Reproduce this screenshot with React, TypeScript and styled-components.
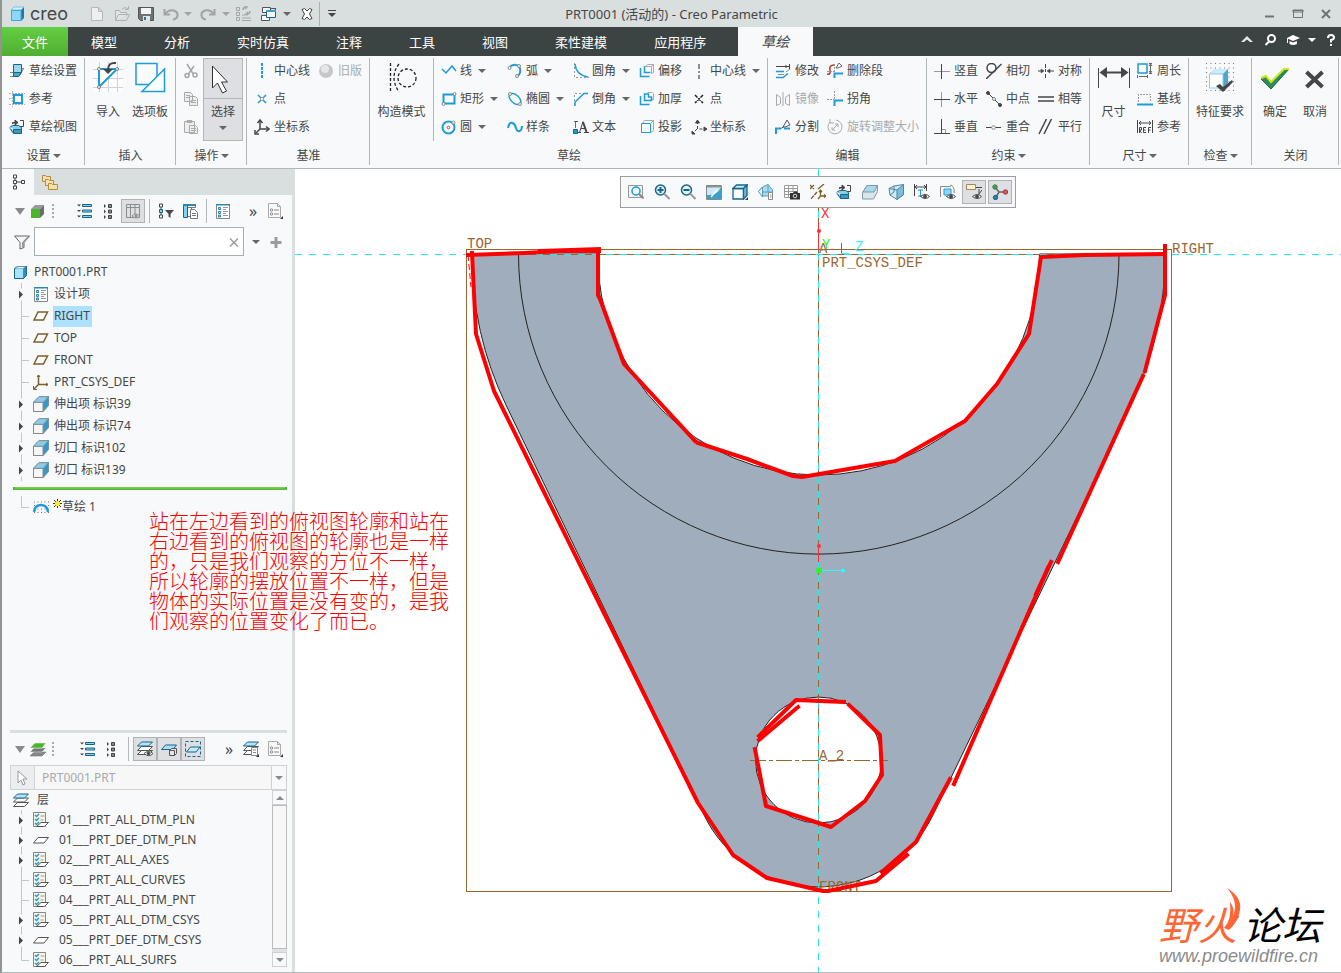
import React from "react";
import styled, { createGlobalStyle, css } from "styled-components";

const c = {
  panel: "#f7f9fb",
  bar: "#d9dfde",
  dark: "#3b4343",
  text: "#444746",
  muted: "#a9abab",
  line: "#b0b9b9",
  blue: "#1f9bd7",
  deep: "#17648a",
  ink: "#464646",
  gray: "#a6a6a6",
  brown: "#996633",
  cyan: "#2ee6e6",
  red: "#ff0000",
  pressed: "#dddfe2",
};

const sans = `"Noto Sans", "Noto Sans CJK SC", sans-serif`;
const mono = `"Liberation Mono", monospace`;

const GlobalStyle = createGlobalStyle`
  * { box-sizing: border-box; }
  body {
    margin: 0;
    font: 12px/16px ${sans};
    color: ${c.text};
    background: #fff;
  }
  button, input, select {
    font: inherit;
    color: inherit;
    margin: 0;
    padding: 0;
    border: 0;
    border-radius: 0;
    background: none;
  }
  ul { list-style: none; margin: 0; padding: 0; }
  svg { display: block; flex: none; }
`;

/* ---------- icons ---------- */

const glyphs: Record<string, React.ReactNode> = {
  logo: (
    <>
      <path d="M11 4l3-3v11l-3 3z" fill="#1b7bac" />
      <path d="M1 4l3-3h10l-3 3z" fill="#d5f1fd" stroke="#3ba9dc" strokeWidth=".6" />
      <path d="M1.500 4.500h9.500v10H1.500z" fill="#8fd6f7" stroke="#3ba9dc" strokeWidth="1" />
    </>
  ),
  newFile: <path d="M2.500 1.500h7l4 4v9h-11zM9.500 1.500v4h4" fill="#eef0f0" stroke="#b4b8b8" />,
  openFile: (
    <g fill="#e3e5e5" stroke="#aeb2b2">
      <path d="M1.500 14.500v-10h4l1 2h6v3" />
      <path d="M1.500 14.500l3-6h11l-3 6zM8 3q3-3 6 0M14.500 0v3.500H11" fill="none" />
    </g>
  ),
  save: (
    <>
      <path d="M.5 1.500h15v13H2.500l-2-2z" fill="#6f7272" stroke="#555" />
      <path d="M3 2h10v6H3z" fill="#f3f5f5" />
      <path d="M5 10h7v5H5z" fill="#dfe4e6" />
      <path d="M6 11h2v3H6z" fill="#2a7196" />
    </>
  ),
  undo: <path d="M1.500 3v5.500H7M2 8q4-5 9-3.500Q15 6 14.500 9.500T10 13.500" fill="none" stroke="#a0a4a4" strokeWidth="2" />,
  redo: <path d="M14.500 3v5.500H9M14 8q-4-5-9-3.500Q1 6 1.500 9.500T6 13.500" fill="none" stroke="#a0a4a4" strokeWidth="2" />,
  regen: (
    <g fill="none" stroke="#a3a7a7">
      <path d="M.5 1.500h3v3h-3zM.5 6.500h3v3h-3zM.5 11.500h3v3h-3zM6 12h9M6 14.500h9M6 9h4" />
      <path d="M7 4q0-3 3-3M14 5q0 3-3 3M9 0l2 1-2 2M12 6l-2 2 2 1" strokeWidth="1.500" />
    </g>
  ),
  windows: (
    <g fill="#f7f9fb" stroke="#555">
      <path d="M1.500 1.500h8v5h-8zM.5 9.500h8v5h-8z" />
      <path d="M5.500 4.500h9v7h-9z" stroke={c.deep} />
      <path d="M5 4h10v2H5z" fill="#3ba0cc" stroke="none" />
      <path d="M10 2.500h5M14.500 2v2" fill="none" />
    </g>
  ),
  closeWin: <path d="M3 3.500l2.500-1L8 5l2.500-2.500L13 3.500 10.500 8l2.500 4.500-2.500 1L8 11l-2.500 2.500L3 12.500 5.500 8z" fill="#fff" stroke="#444" />,
  min: <path d="M3 10.500h9" stroke="#6d7474" strokeWidth="2" />,
  max: <path d="M3.500 4.500h9v7h-9zM3 4h10v2H3z" fill="none" stroke="#6d7474" />,
  x: <path d="M4 4l8 8M12 4l-8 8" stroke="#6d7474" strokeWidth="2" />,
  up: <path d="M2 10l6-6 6 6H11L8 7.500 5 10z" fill="#e4e8e8" />,
  find: (
    <g fill="none" stroke="#fff" strokeWidth="2">
      <circle cx="9.500" cy="6.500" r="3.500" />
      <path d="M7 9.500L3.500 13" />
    </g>
  ),
  learn: <path d="M8 3l7 3-7 3-5-2.200V11H2V6zM4.500 9L8 10.500 12 9v3q-4 2-7.500 0z" fill="#fff" />,
  help: (
    <g fill="none" stroke="#fff" strokeWidth="2">
      <path d="M5 6q0-3 3-3t3 2.500Q11 7.500 8 8v2.500M8 12v2" />
    </g>
  ),
  sketchSetup: (
    <g fill="none" stroke={c.ink}>
      <path d="M1 13.500h9l5-8.500" stroke="#888" />
      <path d="M1 9.500h3M12 5.500h3" stroke="#888" />
      <path d="M4.500 1.500h8v8h-8z" fill="#9bd8ec" stroke={c.deep} />
      <path d="M4.500 9.500h8l-3 4h-5z" fill="#4ba8cf" stroke={c.deep} />
    </g>
  ),
  reference: (
    <g fill="none">
      <path d="M0 7.500h5M3.500 0v16M0 13.500h16M0 2.500h16" stroke="#b0b0b0" strokeDasharray="2 1" />
      <path d="M5 4h8v8H5z" stroke={c.blue} strokeWidth="2" />
    </g>
  ),
  viewFlip: (
    <g fill="none" stroke={c.ink}>
      <path d="M3.500 5V3.500H7M6 1l3 2.500L6 6z" fill={c.ink} />
      <path d="M11 1.500h3.500v6H11" />
      <path d="M.5 8.500l3-2h6l3 2v6h-8z" fill="#8ccdea" stroke={c.deep} />
      <path d="M4.500 14.500v-4h8M.5 8.500l4 2" stroke="#fff" />
      <path d="M4.500 10.500h8v4h-8z" fill="#3f97c0" stroke={c.deep} />
    </g>
  ),
  cut: (
    <g fill="none" stroke="#a5a5a5" strokeWidth="1.500">
      <circle cx="4" cy="12.500" r="2" />
      <circle cx="12" cy="12" r="2" />
      <path d="M4 1l6 9.500M11 3L5.500 11" />
    </g>
  ),
  copy: <path d="M1.500 1.500h6l2 2v7h-8zM6.500 5.500h6l2 2v7h-8zM3 4.500h4M3 6.500h3M8 9.500h5M8 11.500h5" fill="#eeeeee" stroke="#aaa" />,
  paste: <path d="M1.500 2.500h10v11h-10zM4 1.500h5v2H4zM6.500 6.500h6l2 2v6h-8zM8 9.500h5M8 11.500h5" fill="#eeeeee" stroke="#aaa" />,
  axis: <path d="M8 0v16" stroke={c.blue} strokeWidth="2" strokeDasharray="3 1" />,
  ball: (
    <>
      <circle cx="8" cy="8" r="7" fill="#c6c7c8" />
      <circle cx="7" cy="6" r="4" fill="#e6e6e6" />
    </>
  ),
  point: (
    <>
      <path d="M4 4l8 8M12 4l-8 8" stroke={c.blue} strokeWidth="1.500" />
      <path d="M6.500 6.500h3v3h-3z" fill="#f7f9fb" stroke="#777" strokeWidth=".6" />
    </>
  ),
  csys: (
    <g fill="none" stroke={c.ink} strokeWidth="1.500">
      <path d="M6 2v8h8M6 10l-4 4" />
      <path d="M3.500 4L6 1l2.500 3M12 7.500L15 10l-3 2.500M1 11v4h4" />
    </g>
  ),
  polyline: <path d="M1 6l4 4 6-7 4 5" fill="none" stroke={c.blue} strokeWidth="1.500" />,
  rectangle: (
    <g fill="#f7f9fb">
      <path d="M2.500 3.500h11v9h-11z" stroke={c.blue} strokeWidth="2" />
      <circle cx="13.500" cy="3" r="1.500" stroke="#888" />
      <circle cx="2.500" cy="13" r="1.500" stroke="#888" />
    </g>
  ),
  circle: (
    <g fill="none">
      <circle cx="7.500" cy="8.500" r="6" stroke={c.blue} strokeWidth="2" />
      <circle cx="7.500" cy="8.500" r="1.300" stroke="#666" />
      <circle cx="12.500" cy="3.500" r="1.500" stroke="#888" fill="#f7f9fb" />
    </g>
  ),
  arc: (
    <g fill="none">
      <path d="M3 3.500q6-4 9.500 1 2 4-1 8" stroke={c.blue} strokeWidth="2" />
      <g fill="#f7f9fb" stroke="#888">
        <circle cx="2.500" cy="5" r="1.500" />
        <circle cx="12" cy="3" r="1.500" />
        <circle cx="10" cy="13" r="1.500" />
      </g>
    </g>
  ),
  ellipse: (
    <g fill="none">
      <ellipse cx="8" cy="8" rx="7" ry="4" transform="rotate(42 8 8)" stroke={c.blue} strokeWidth="1.500" />
      <g fill="#f7f9fb" stroke="#888">
        <circle cx="3" cy="3" r="1.500" />
        <circle cx="13" cy="13" r="1.500" />
      </g>
    </g>
  ),
  spline: <path d="M1 9q1-6 4.500-5 2.500 1 3.500 5t3.500 3Q15 11 15 7" fill="none" stroke={c.blue} strokeWidth="2" />,
  fillet: (
    <g fill="none">
      <path d="M1.500 0v14.500H16" stroke="#999" strokeDasharray="2 2" />
      <path d="M2 1q1 11 13 13" stroke={c.blue} strokeWidth="1.500" />
    </g>
  ),
  chamfer: (
    <g fill="none">
      <path d="M1.500 14V2.500H15" stroke="#999" strokeDasharray="2 2" />
      <path d="M2 15V11l9-8.500h4" stroke={c.blue} strokeWidth="1.500" />
    </g>
  ),
  textTool: (
    <g fill="none" stroke={c.ink}>
      <path d="M2.500 9V2.500H5M1 2.500h3" strokeWidth=".8" />
      <path d="M.5 10.500h4v4h-4z" fill={c.blue} stroke={c.deep} />
      <path d="M5 13.500h3M11 13.500h5M6.500 13.500L10 2.500M8 9.500h5" />
      <path d="M10 3l3.500 10" strokeWidth="2" />
    </g>
  ),
  offset: (
    <g fill="none">
      <path d="M6.500 3.500l2-2h6v8l-2 1M6.500 3.500h6v7M12.500 3.500l2-2" stroke="#aaa" />
      <path d="M1.500 5v8.500h9M5.500 3v6.500h6" stroke={c.blue} strokeWidth="1.500" />
    </g>
  ),
  thicken: (
    <g fill="none">
      <path d="M8.500 1.500h5l1 1v6h-3" stroke="#aaa" />
      <path d="M1.500 5v8.500h9M5.500 3v6.500h7V6h-3V3z" stroke={c.blue} strokeWidth="1.500" />
    </g>
  ),
  project: (
    <g fill="none">
      <path d="M3.500 4.500l2-3h9v10l-3 2M12 4l2.500-2.500" stroke="#aaa" />
      <path d="M2.500 4.500h9v9h-9z" stroke={c.blue} />
    </g>
  ),
  centerDash: <path d="M8 1v15" stroke="#222" strokeDasharray="5 2 2 2" />,
  pointDash: <path d="M4 4l8 8M12 4l-8 8" stroke="#222" strokeWidth="1.500" strokeDasharray="3.500 1" />,
  csysDash: (
    <g fill="none" stroke={c.ink}>
      <path d="M6.500 2v8H14M6 10l-5 5" strokeDasharray="3 2" />
      <path d="M4.500 4l2-3 2 3zM13 8l3 2-3 2zM1 12v3h3z" fill={c.ink} />
    </g>
  ),
  modify: (
    <g fill="none">
      <path d="M1 3.500h14M14.500 1v5M11 2v3" stroke={c.ink} />
      <path d="M1 8.500h8M1 14.500h7l5-4" stroke={c.blue} strokeWidth="1.500" />
      <path d="M3 11.500h6M11 9l4-3" stroke="#888" />
    </g>
  ),
  mirror: <path d="M8 1v14M1.500 3.500l4 3v6l-4 2zM14.500 3.500l-4 3v6l4 2z" fill="none" stroke="#aaa" />,
  divide: (
    <g fill="none">
      <path d="M1 15V9.500h5M9 9.500h6" stroke={c.blue} strokeWidth="2" />
      <path d="M8 8l4-7 3 5-5 2z" fill="#f7f9fb" stroke="#555" />
      <path d="M6 9.500l3-2" stroke="#555" />
    </g>
  ),
  trim: (
    <g fill="none">
      <path d="M0 11q4 1 3-4t4-5" stroke="#b5352a" strokeWidth="1.500" />
      <path d="M7.500 15v-4.500H16" stroke={c.blue} strokeWidth="2" />
      <path d="M9 5l3-5 3 3-4 2z" fill="#f7f9fb" stroke="#666" />
      <path d="M0 8.500h7M7.500 1v8" stroke="#999" strokeDasharray="2 1" />
    </g>
  ),
  corner: (
    <g fill="none">
      <path d="M7.500 0v9M0 8.500h7" stroke="#999" strokeDasharray="2 1" />
      <path d="M7.500 15V9.500H16" stroke={c.blue} strokeWidth="2" />
    </g>
  ),
  rotate: (
    <g fill="none" stroke="#aaa">
      <path d="M3 3A7 7 0 1 0 9 1M3 0v4h4" />
      <path d="M5 11l6-6M5 8v3h3M8 5h3v3" />
    </g>
  ),
  cVert: (
    <g fill="none">
      <path d="M0 8.500h16" stroke="#999" />
      <path d="M7.500 1v15" stroke={c.ink} />
    </g>
  ),
  cHoriz: (
    <g fill="none">
      <path d="M7.500 1v15" stroke="#999" />
      <path d="M0 8.500h16" stroke={c.ink} />
    </g>
  ),
  cPerp: (
    <g fill="none" stroke={c.ink}>
      <path d="M0 14.500h16M7.500 0v14" />
      <path d="M8 10.500h3.500V14" stroke="#999" />
    </g>
  ),
  cTangent: (
    <g fill="none" stroke={c.ink}>
      <circle cx="5.500" cy="5" r="4.500" strokeWidth="1.500" />
      <path d="M0 16L15.500 1" strokeWidth="1.500" />
    </g>
  ),
  cMid: (
    <g fill={c.ink} stroke={c.ink}>
      <path d="M2 2l12 12" />
      <circle cx="2" cy="2" r="1.500" />
      <circle cx="14" cy="14" r="1.500" />
      <circle cx="8" cy="8" r="1.500" fill="#fff" stroke="#888" />
    </g>
  ),
  cCoin: (
    <g fill="#fff" stroke={c.ink}>
      <path d="M0 8.500h15" />
      <circle cx="7.500" cy="8.500" r="1.800" stroke="#888" />
    </g>
  ),
  cSym: (
    <g fill={c.ink} stroke={c.ink}>
      <path d="M7.500 1v4M7.500 6v3M7.500 11v4M0 8h4M11 8h5" />
      <path d="M3 6l3 2-3 2zM12 6L9 8l3 2z" strokeWidth=".5" />
    </g>
  ),
  cEqual: <path d="M0 6h16M0 10h16" stroke={c.ink} strokeWidth="1.500" />,
  cParallel: <path d="M1 15L8.500 0M6 15L13.500 0" stroke={c.ink} strokeWidth="1.500" />,
  perimeter: (
    <g fill="none">
      <path d="M1 1h9v9H1z" stroke={c.blue} strokeWidth="1.500" />
      <path d="M13.500 1v9M12 .5h3M12 10.500h3M2 13.500h8M.5 12v3M10.500 12v3" stroke="#666" />
      <path d="M12 3l1.500-2L15 3M12 8l1.500 2L15 8" stroke="#666" />
    </g>
  ),
  baseline: (
    <g fill="none">
      <path d="M1.500 11V3.500h12V11" stroke="#999" strokeDasharray="2 1" />
      <path d="M0 13.500h16" stroke={c.blue} strokeWidth="2" />
    </g>
  ),
  refDim: (
    <g fill="none" stroke={c.ink}>
      <path d="M.5 1v13M15.500 1v13M2 4h12M4 2L2 4l2 2M12 2l2 2-2 2" />
      <path d="M2.500 14V8.500h2v2.500h-2l2 3M9 8.500H6.500v5H9M6.500 11H8.500M11.500 14V8.500H14M11.500 11h2" strokeWidth="1" />
    </g>
  ),
  treeTab: (
    <g fill="none" stroke={c.ink}>
      <path d="M3.500 1h3v3h-3zM3.500 6.500h3v3h-3zM3.500 12h3v3h-3zM11.500 6.500h3v3h-3zM5 4v2.500M5 9.500V12M6.500 8h5" />
    </g>
  ),
  folders: (
    <g fill="#f6e0ae" stroke="#b98b3c">
      <path d="M.5 1.500h3l1 1h4v5h-8z" />
      <path d="M3.500 5.500h3l1 1h4v5h-8z" />
      <path d="M6.500 9.500h3l1 1h5v5h-9z" />
    </g>
  ),
  greenCube: (
    <>
      <path d="M1 6h9v9H1z" fill="#4bb52c" />
      <path d="M1 6l4-4h9l-4 4z" fill="#9b9b9b" />
      <path d="M10 6l4-4v9l-4 4z" fill="#6c6c6c" />
    </>
  ),
  dots: <path d="M7 1v15" stroke="#a9abab" strokeWidth="2" strokeDasharray="2 2" />,
  expand: (
    <g>
      <path d="M5.500 1.500h9v2h-9zM5.500 7h9v2h-9zM5.500 12.500h9v2h-9z" fill="#7fd3f5" stroke={c.deep} />
      <path d="M0 1.500h4l-2 2zM0 7h4l-2 2zM0 12.500h4l-2 2z" fill="#444" />
    </g>
  ),
  collapse: (
    <g>
      <path d="M7.500 1.500h3v3h-3zM7.500 7h3v3h-3zM7.500 12.500h3v3h-3z" fill="#888" stroke="#444" />
      <path d="M3 1l2 2-2 2zM3 6.500l2 2-2 2zM3 12l2 2-2 2z" fill="#444" />
    </g>
  ),
  columns: (
    <g fill="none" stroke="#8b8d8f">
      <path d="M1.500 1.500h13v13h-13zM1.500 4.500h13M5.500 2v12M10 2v12" />
      <path d="M7 13q3-4 8 0-4 4-8 0z" fill="#ddd" />
      <circle cx="11" cy="13" r="1" fill="#777" />
    </g>
  ),
  treeFilter: (
    <g fill="none" stroke={c.ink}>
      <path d="M1.500 1h3v3h-3zM1.500 12h3v3h-3zM3 4v8" />
      <path d="M1.500 6.500h3v3h-3z" fill="#7fd3f5" stroke={c.deep} />
      <path d="M7 7h9l-3.500 4v4l-2-1.500V11z" fill={c.ink} stroke="none" />
    </g>
  ),
  treeColumns: (
    <g fill="#fff" stroke="#777">
      <path d="M1.500 1.500h12v3h-12zM5.500 4.500h4v9h-4z" />
      <path d="M1.500 2.500h4v12h-4z" fill="#7fd3f5" stroke={c.deep} />
      <path d="M1 1h13v2H1z" fill="#2b87b3" stroke="none" />
      <path d="M8.500 6.500h4l3 3v6h-7zM10 10.500h4M10 12.500h4" />
    </g>
  ),
  design: (
    <g>
      <path d="M1.500 1.500h13v14h-13z" fill="#fff" stroke="#888" />
      <path d="M1 1h14v1.500H1z" fill="#2b87b3" />
      <path d="M3.500 4.500h2v2h-2zM3.500 8.500h2v2h-2zM3.500 12h2v2h-2z" fill="#9fdcf8" stroke="#2b87b3" />
      <path d="M8 4.500h5M8 6.500h3M8 8.500h5M8 10.500h3M8 12.500h5" stroke="#999" />
    </g>
  ),
  settingsDoc: (
    <g>
      <path d="M1.500.5h9l3 3v11h-12z" fill="#fafafa" stroke="#aaa" />
      <path d="M10.500.5v3h3" fill="none" stroke="#aaa" />
      <circle cx="4.500" cy="7" r="1.200" fill="none" stroke="#888" />
      <circle cx="4.500" cy="11" r="1.200" fill="none" stroke="#888" />
      <path d="M7 7h5M7 11h5" stroke="#888" />
      <path d="M16 13v3h-3z" fill="#333" />
    </g>
  ),
  funnel: (
    <g>
      <path d="M.5 2h15L10 8.500v5L6 15V8.500z" fill="#f5f5f5" stroke="#666" />
      <path d="M10 8.500v4.500l-2 1V8.500L13 3h2.500z" fill="#999" />
    </g>
  ),
  plus: <path d="M8 3v11M2.500 8.500h11" stroke="#9b9d9d" strokeWidth="3" />,
  part: (
    <g stroke={c.deep}>
      <path d="M1.500 4.500l3-2h9v9l-3 3h-9z" fill="#a5e3fb" />
      <path d="M10.500 4.500l3-2v9l-3 3z" fill="#2f8dbb" strokeWidth=".5" />
      <path d="M2 4.500l3-2h8l-3 2z" fill="#d8f4fe" strokeWidth=".3" />
    </g>
  ),
  plane: <path d="M1 12L5 4h9.500l-4 8z" fill="none" stroke="#7d5f2a" strokeWidth="1.500" />,
  csysBrown: (
    <g fill="none" stroke="#7d5f2a" strokeWidth="1.500">
      <path d="M5.500 1v9.500H15M5.500 10.500L1 15" />
      <path d="M4 3l1.500-2L7 3M13 9l2 1.500L13 12M.5 12v3.500H4" strokeWidth="1" />
    </g>
  ),
  solid: (
    <g stroke="#888">
      <path d="M.5 6L6 .5h9.500v9L10 15.500H.5z" fill="#d5ecf6" />
      <path d="M10 6.500l5.500-6v9l-5.500 6z" fill="#3a97c4" stroke="#6b98ab" />
      <path d="M.5 6.500H10v9H.5z" fill="#f7f7f7" />
      <path d="M6 .8h9L10 6.200H1z" fill="#8fcbe5" stroke="#6b98ab" strokeWidth=".6" />
    </g>
  ),
  sketch: (
    <g fill="none">
      <path d="M1 3h15M1 6.500h15M1 10h15M1 13.500h15" stroke="#777" strokeDasharray="1 2.500" />
      <path d="M1 13q1-7 7-7t7 7" stroke={c.blue} strokeWidth="2.500" />
    </g>
  ),
  layersGreen: (
    <g strokeWidth=".5">
      <path d="M0 15l4-4h12l-4 4z" fill="#888" stroke="#666" />
      <path d="M0 11l4-4h12l-4 4z" fill="#777" stroke="#f7f9fb" />
      <path d="M0 7l5-5h11l-4 5z" fill="#4bb52c" stroke="#f7f9fb" />
    </g>
  ),
  layers: (
    <g fill="#fff" stroke="#555">
      <path d="M.5 14.500l4-4h11l-4 4z" />
      <path d="M.5 10l4-4h11l-4 4z" />
      <path d="M.5 6l4-4h11l-4 4z" fill="#b7e6fa" stroke={c.deep} />
    </g>
  ),
  layersEye: (
    <g fill="#fff" stroke="#555">
      <path d="M.5 13.500l4-4h11l-4 4z" />
      <path d="M.5 9.500l4-4h11l-4 4z" />
      <path d="M.5 5l4-4h11l-4 4z" fill="#b7e6fa" stroke={c.deep} />
      <path d="M7 12.500q4-4 9 0-4 4.500-9 0z" />
      <circle cx="11.500" cy="12.500" r="1.500" fill="#444" />
    </g>
  ),
  layerCube: (
    <g fill="none" stroke="#555">
      <path d="M.5 8.500l4-4.500h11L12 8.500z" fill="#a9e0f8" stroke={c.deep} />
      <path d="M8.500 9.500h5v5h-5zM8.500 9.500l2-2h5v5l-2 2" fill="#e6e6e6" />
    </g>
  ),
  layerDash: (
    <g fill="none">
      <path d="M.5.5h15v15H.5z" stroke={c.deep} strokeDasharray="3 2" />
      <path d="M1.500 11l4-5h9.500l-4 5z" fill="#c5ecfb" stroke={c.deep} />
    </g>
  ),
  layersList: (
    <g fill="#fff" stroke="#555">
      <path d="M.5 13.500l4-4h7v4z" />
      <path d="M.5 9.500l4-4h11l-4 4z" />
      <path d="M.5 5l4-4h11l-4 4z" fill="#b7e6fa" stroke={c.deep} />
      <path d="M8.500 6.500h6v8h-6zM10 9h3M10 11.500h3" stroke="#888" />
      <path d="M16 13v3h-3z" fill="#333" stroke="none" />
    </g>
  ),
  cursorSmall: <path d="M3 1v12l3-3 2 5 2-1-2-5h4z" fill="#fff" stroke="#999" />,
  layerRule: (
    <g>
      <path d="M.5.5h12v14H.5z" fill="#fdf6e4" stroke="#888" />
      <path d="M2 3l1.500 1.500L6 2M2 7l1.500 1.500L6 6M2 11l1.500 1.500L6 10" fill="none" stroke={c.blue} strokeWidth="1.500" />
      <path d="M7.500 4h4M7.500 8h3" stroke="#999" />
      <path d="M3.500 14.500L8 10.500h7.500l-4 4z" fill="#fff" stroke="#555" />
    </g>
  ),
  layerItem: <path d="M.5 11L5 5.500h10.500L11 11z" fill="#fff" stroke="#555" />,
  zoomFit: (
    <g fill="none">
      <path d="M.5 1.500h14v12H.5z" stroke="#999" fill="#f0f2f3" />
      <circle cx="8" cy="7" r="4" stroke={c.blue} strokeWidth="1.500" fill="#eaf7fd" />
      <path d="M11 10l4.500 4.500" stroke="#888" strokeWidth="2" />
    </g>
  ),
  zoomIn: (
    <g fill="none">
      <circle cx="6.500" cy="6" r="5" stroke={c.deep} strokeWidth="1.500" fill="#e2f4fc" />
      <path d="M6.500 3v6M3.500 6h6" stroke={c.deep} strokeWidth="2" />
      <path d="M10 9.500l5.500 5.500" stroke="#999" strokeWidth="2" />
    </g>
  ),
  zoomOut: (
    <g fill="none">
      <circle cx="6.500" cy="6" r="5" stroke={c.deep} strokeWidth="1.500" fill="#e2f4fc" />
      <path d="M3.500 6h6" stroke={c.deep} strokeWidth="2" />
      <path d="M10 9.500l5.500 5.500" stroke="#999" strokeWidth="2" />
    </g>
  ),
  repaint: (
    <g>
      <path d="M.5 1.500h15v14H.5z" fill="#cdebf7" stroke="#888" />
      <path d="M1 15V11Q11 12 15 3v12z" fill="#3e9fca" />
      <path d="M1 2h14v1.500H1z" fill="#8a9499" />
      <path d="M5 13l6-7" stroke="#fff" strokeWidth="1.500" />
    </g>
  ),
  viewBox: (
    <g fill="#fff" stroke={c.deep} strokeWidth="1.300">
      <path d="M1 4.500h10.500V15H1z" />
      <path d="M1 4.500L4.500 1H15l-3.500 3.500z" fill="#c5ecfb" />
      <path d="M15 1v10.500L11.500 15V4.500z" fill="#63bce2" />
      <path d="M16 13v3h-3z" fill="#333" stroke="none" />
    </g>
  ),
  savedView: (
    <g stroke="#5b9dba">
      <path d="M.5 7.500L4.500 3 10 .5l4.500 5.500v6H5z" fill="#a9dcf0" />
      <path d="M4.500 3v10M4.500 8h10M10 .5V8" fill="none" stroke="#5b9dba" />
      <path d="M.5 7.500l4-4.500v10z" fill="#e3f4fb" />
      <path d="M10.500 8.500h4v7h-4zM12 11h1.500M12 13h1.500" fill="#fff" stroke="#888" />
    </g>
  ),
  viewManager: (
    <g fill="#fff" stroke="#999">
      <path d="M.5 1.500h13v12H.5zM.5 4.500h13M.5 7.500h13M.5 10.500h6M4.500 2v11M9 2v5" />
      <path d="M6 9h3l1-1.500h3L14 9h2v6.500H6z" fill="#333" stroke="none" />
      <circle cx="11" cy="12" r="1.800" fill="#333" stroke="#ddd" />
    </g>
  ),
  datum: (
    <g fill="none" stroke="#7d5f2a" strokeWidth="1.300">
      <path d="M0 1l4 4M4 1L0 5M14 0L8 5" />
      <path d="M7 8l-6 7" strokeDasharray="4 1" />
      <path d="M10.500 6v6H16M10.500 12L8 15M9 8l1.500-2L12 8M14 10.500l2 1.500-2 1.500" />
    </g>
  ),
  xray: (
    <g stroke="#7d9ba8">
      <path d="M.5 8.500L5 1.500h10.500v6l-4 7.500H.5z" fill="#d9e7ec" />
      <path d="M5 1.500h10.500L12 8H1z" fill="#a9d8ec" />
    </g>
  ),
  section: (
    <g stroke="#4d86a0">
      <path d="M1 4.500L6 2l9.500-1.500v10L9 15.500 2 11z" fill="#cfe8f3" />
      <path d="M9 6l6.500-5.500v10L9 15.500z" fill="#76bfe0" />
      <path d="M1 4.500L9 6M6 2v6l-4 3" fill="none" />
    </g>
  ),
  dimShow: (
    <g fill="none" stroke={c.ink}>
      <path d="M.5 0v12M12.500 0v7M1 3h11M3 1L1 3l2 2M10 1l2 2-2 2" />
      <path d="M6.500 6v6M4 6h5M4 12h4" stroke={c.blue} />
      <path d="M6.500 12.500q5-4 9 0-4 4-9 0z" fill="#fff" />
      <circle cx="11" cy="12.500" r="1.500" fill="#444" />
    </g>
  ),
  planeShow: (
    <g fill="none" stroke={c.ink}>
      <path d="M.5 13V2.500h10" stroke="#888" />
      <path d="M4 5h7v6H4z" fill="#8fd6f7" stroke={c.blue} />
      <path d="M10 1q5 1 4 8" stroke="#888" />
      <path d="M6.500 12.500q5-4 9 0-4 4-9 0z" fill="#fff" />
      <circle cx="11" cy="12.500" r="1.500" fill="#444" />
    </g>
  ),
  noteShow: (
    <g stroke={c.ink}>
      <path d="M.5.500h9v5h-9z" fill="#fdf1d3" stroke="#a58a55" />
      <path d="M10 3.500h6M13 5v5l3-4" fill="none" />
      <path d="M6.500 12.500q5-4 9 0-4 4-9 0z" fill="#fff" />
      <circle cx="11" cy="12.500" r="1.500" fill="#444" />
    </g>
  ),
  spin: (
    <g stroke="#666">
      <path d="M3 3l4 5h6M7 8l-3 5" fill="none" strokeWidth="1.500" />
      <circle cx="3" cy="3" r="2.200" fill="#4f9c53" stroke="#3c7c40" />
      <circle cx="13.500" cy="8" r="2.200" fill="#d55" stroke="#a33" />
      <circle cx="3.500" cy="13.500" r="2.200" fill="#2f7ea8" stroke="#225f80" />
    </g>
  ),
};

const bigGlyphs: Record<string, React.ReactNode> = {
  importFile: (
    <g fill="none">
      <path d="M2 2h28v28H2z" fill="#fdfdfd" stroke="none" />
      <path d="M1 8.500h30M1 17.500h30M1 26.500h30M7.500 1v30M16.500 1v30M25.500 1v30" stroke="#d3d3d3" />
      <path d="M7 8h18L7 26z" stroke={c.blue} strokeWidth="2" fill="#fff" />
      <path d="M24 2q-8-1-8 7" stroke={c.ink} strokeWidth="2" />
      <path d="M11 8h10l-5 5z" fill={c.ink} />
      <g fill="#fff" stroke="#777">
        <circle cx="7" cy="8" r="1.500" />
        <circle cx="25" cy="8" r="1.500" />
        <circle cx="7" cy="26" r="1.500" />
      </g>
    </g>
  ),
  palette: (
    <g fill="#fafcfd" stroke={c.blue} strokeWidth="1.500">
      <path d="M2 2.500h21v21H2z" />
      <path d="M30.500 8v22.500H8z" />
    </g>
  ),
  cursor: <path d="M5.500 3v22l5-5 5 10 4-2-5-9h6z" fill="#fff" stroke="#333" />,
  construct: (
    <g fill="none" stroke="#222" strokeWidth="1.300" strokeDasharray="3 2">
      <circle cx="21" cy="17" r="9" />
      <path d="M4.500 2v29M13 3Q3 16 13 31" />
    </g>
  ),
  dimension: (
    <g fill={c.ink} stroke={c.ink}>
      <path d="M.5 7v20M31.500 7v20" />
      <path d="M6 11.500h20" strokeWidth="2" />
      <path d="M1.500 11.500L9 6v11zM30.500 11.500L23 6v11z" stroke="none" />
    </g>
  ),
  requirement: (
    <g>
      <path d="M2 2.500h29M2 7h29M2 11.500h29M2 16h29M2 20.500h29M2 25h29M2 29.500h29" stroke="#777" strokeDasharray="1 3.500" />
      <path d="M5 13l5-5h14v14l-6 5H5z" fill="#c9ecf8" />
      <path d="M19 13l5-5v14l-5 5z" fill="#4da6cc" />
      <path d="M5.500 13H19v14H5.500z" fill="#fff" stroke="#8fcbe5" />
      <path d="M12 25l4-2 3 3 9-7 1 2-10 10z" fill={c.ink} />
    </g>
  ),
  ok: (
    <g>
      <path d="M2 18l5-3 5 6L25 8h5L12 28z" fill="#2f8a5f" stroke="#1f6b40" />
      <path d="M2 17l5-2 5 6L25 8h5" fill="none" stroke="#c9ea1c" strokeWidth="2" />
    </g>
  ),
  cancel: <path d="M7.500 11l16 15M23.500 11l-16 15" stroke={c.ink} strokeWidth="4" />,
};

const Icon = ({ name }: { name: string }) => (
  <svg width="16" height="16" viewBox="0 0 16 16" aria-hidden="true">{glyphs[name]}</svg>
);
const BigIcon = ({ name }: { name: string }) => (
  <svg width="32" height="32" viewBox="0 0 32 32" aria-hidden="true">{bigGlyphs[name]}</svg>
);
const Caret = ({ color = "#666" }: { color?: string }) => (
  <svg width="8" height="4" viewBox="0 0 8 4" aria-hidden="true"><path d="M0 0h8L4 4z" fill={color} /></svg>
);

/* ---------- frame ---------- */

const Page = styled.div`
  display: flex;
  flex-direction: column;
  min-height: 100vh;
  border-left: 2px solid #929494;
  border-bottom: 1px solid ${c.line};
`;

const TitleBar = styled.header`
  display: grid;
  grid-template-columns: 1fr auto 1fr;
  align-items: center;
  height: 27px;
  background: ${c.bar};
`;

const Brand = styled.span`
  display: flex;
  align-items: center;
  gap: 4px;
  width: 80px;
  padding-left: 8px;
  font: 18px/24px "Inter", sans-serif;
`;

const QuickBar = styled.div`
  display: flex;
  align-items: center;
`;

const QuickButton = styled.button<{ $w?: number }>`
  display: flex;
  align-items: center;
  justify-content: center;
  width: ${(p) => p.$w ?? 24}px;
  height: 24px;
`;

const QuickRule = styled.span`
  width: 1px;
  height: 24px;
  background: #aab0b0;
`;

const Title = styled.h1`
  margin: 0;
  font: 13px/18px ${sans};
`;

const WindowButtons = styled.div`
  display: flex;
  justify-content: flex-end;
  gap: 4px;
  padding-right: 3px;
`;

const TabBar = styled.nav`
  display: flex;
  height: 29px;
  background: ${c.dark};
  color: #fff;
  font-size: 13px;
`;

const Tab = styled.button<{ $kind?: "file" | "active" }>`
  padding: 0 24px 0 23px;
  ${(p) => p.$kind === "file" && css`
    padding: 0 20px;
    background: linear-gradient(#63cf42, #4fae31);
  `}
  ${(p) => p.$kind === "active" && css`
    margin-left: 8px;
    color: ${c.text};
    background: ${c.panel};
    font-size: 14px;
    font-style: italic;
  `}
`;

const TabTools = styled.div`
  display: flex;
  align-items: center;
  gap: 7px;
  margin-left: auto;
  padding: 0 2px 4px 0;
`;

/* ---------- ribbon ---------- */

const Ribbon = styled.div`
  display: flex;
  height: 113px;
  background: ${c.panel};
  border-bottom: 1px solid ${c.line};
`;

const GroupBox = styled.section<{ $w: number }>`
  display: flex;
  flex-direction: column;
  flex: 0 0 ${(p) => p.$w}px;
  padding-top: 1px;
  background: linear-gradient(${c.line}, ${c.line}) right 2px / 1px 107px no-repeat;
`;

const GroupBody = styled.div<{ $pad?: number }>`
  display: flex;
  height: 84px;
  padding-left: ${(p) => p.$pad ?? 0}px;
`;

const GroupName = styled.h2`
  display: flex;
  align-items: center;
  justify-content: center;
  gap: 2px;
  margin: 0;
  padding-top: 2px;
  height: 27px;
  font: 12px/16px ${sans};
`;

const Stack = styled.div<{ $w?: number }>`
  display: flex;
  flex-direction: column;
  width: ${(p) => (p.$w ? `${p.$w}px` : "auto")};
`;

const ToolButton = styled.button<{ $gap: number; $off?: boolean }>`
  display: flex;
  align-items: center;
  gap: ${(p) => p.$gap}px;
  height: 28px;
  white-space: nowrap;
  color: ${(p) => (p.$off ? c.muted : "inherit")};
`;

const ToolText = styled.span`
  margin-right: 3px;
`;

const BigButton = styled.button<{ $w: number }>`
  display: flex;
  flex-direction: column;
  align-items: center;
  gap: 11px;
  width: ${(p) => p.$w}px;
  height: 84px;
  padding-top: 4px;
  white-space: nowrap;
`;

const SelectButton = styled.button`
  display: flex;
  flex-direction: column;
  align-items: center;
  width: 40px;
  height: 83px;
  margin: 1px 0 0 4px;
  border: 1px solid #b4b6b8;
  background: linear-gradient(#b4b6b8, #b4b6b8) 0 39px / 100% 1px no-repeat, ${c.pressed};
`;

const SelectIcon = styled.span`
  height: 40px;
  padding-top: 4px;
`;

const SelectText = styled.span`
  padding: 5px 0 6px;
`;

const InnerRule = styled.span`
  width: 1px;
  margin: 1px 7px 0 0;
  background: ${c.line};
`;

type Tool = { icon: string; label: string; caret?: boolean; off?: boolean };
const t = (icon: string, label: string, caret = false, off = false): Tool => ({ icon, label, caret, off });

const Tools = ({ items, w, gap = 4 }: { items: Tool[]; w?: number; gap?: number }) => (
  <Stack $w={w}>
    {items.map((i) => (
      <ToolButton key={i.label} type="button" $gap={gap} $off={i.off} disabled={i.off}>
        <Icon name={i.icon} />
        <ToolText>{i.label}</ToolText>
        {i.caret && <Caret />}
      </ToolButton>
    ))}
  </Stack>
);

const Group = (p: { name: string; w: number; pad?: number; caret?: boolean; children: React.ReactNode }) => (
  <GroupBox $w={p.w}>
    <GroupBody $pad={p.pad}>{p.children}</GroupBody>
    <GroupName>{p.name}{p.caret && <Caret />}</GroupName>
  </GroupBox>
);

const Big = ({ icon, label, w }: { icon: string; label: string; w: number }) => (
  <BigButton type="button" $w={w}><BigIcon name={icon} /><span>{label}</span></BigButton>
);

/* ---------- side panel ---------- */

const Main = styled.main`
  position: relative;
  display: flex;
  flex: 1;
`;

const Side = styled.aside`
  display: flex;
  flex-direction: column;
  flex: 0 0 293px;
  border-right: 3px solid ${c.bar};
  background: ${c.panel};
`;

const SideTabs = styled.div`
  display: flex;
  height: 26px;
  background: ${c.bar};
`;

const SideTab = styled.button<{ $on?: boolean }>`
  display: flex;
  align-items: center;
  justify-content: center;
  width: 32px;
  background: ${(p) => (p.$on ? c.panel : "transparent")};
`;

const PanelBar = styled.div`
  display: flex;
  align-items: center;
  height: 32px;
  padding: 0 5px 0 13px;
`;

const PanelButton = styled.button<{ $on?: boolean; $left?: number }>`
  display: flex;
  align-items: center;
  justify-content: center;
  width: 24px;
  height: 24px;
  margin-left: ${(p) => p.$left ?? 0}px;
  ${(p) => p.$on && css`
    border: 1px solid #b0b2b4;
    background: ${c.pressed};
  `}
`;

const MenuMark = styled.button`
  display: flex;
  align-items: center;
  width: 15px;
`;

const PanelRule = styled.span`
  width: 1px;
  height: 24px;
  margin: 0 4px;
  background: ${c.line};
`;

const More = styled.button`
  width: 20px;
  margin-left: auto;
  font-size: 16px;
`;

const FilterRow = styled.div`
  display: flex;
  align-items: center;
  padding: 0 8px 0 12px;
  gap: 4px;
`;

const FilterField = styled.span`
  display: flex;
  align-items: center;
  width: 210px;
  height: 29px;
  padding-right: 1px;
  border: 1px solid #a3b1b3;
  background: #fff;
`;

const FilterInput = styled.input`
  flex: 1;
  min-width: 0;
  padding-left: 6px;
  outline: none;
`;

const Clear = styled.button`
  display: flex;
`;

const FilterButton = styled.button`
  display: flex;
  justify-content: center;
  width: 16px;
`;

const Tree = styled.ul`
  flex: 1;
  padding: 5px 4px 0 0;
`;

const TreeRow = styled.li<{ $h: number; $gap: number }>`
  display: flex;
  align-items: center;
  gap: ${(p) => p.$gap}px;
  height: ${(p) => p.$h}px;
  padding-left: 11px;
`;

const TreeText = styled.span<{ $on?: boolean }>`
  padding: 2px 2px 3px 1px;
  background: ${(p) => (p.$on ? "#ade2ff" : "transparent")};
  white-space: nowrap;
`;

const Inset = styled.span`
  width: 1px;
`;

const InsertLine = styled.li`
  height: 3px;
  margin: 6px 1px 6px 11px;
  border: solid #52b52d;
  border-width: 0 2px;
  background: linear-gradient(#7fd55d, #4fb32b);
`;

const NewFeature = styled.span`
  display: flex;
  align-items: center;
`;

const Divider = styled.div`
  height: 3px;
  margin: 0 5px 0 8px;
  background: ${c.bar};
`;

const LayerPicker = styled.div`
  display: flex;
  height: 25px;
  margin: 0 5px 0 8px;
  border: 1px solid #cfd2d4;
`;

const PickButton = styled.button`
  display: flex;
  align-items: center;
  justify-content: center;
  width: 24px;
  border-right: 1px solid #cfd2d4;
  background: #ebedee;
`;

const PickSelect = styled.select`
  flex: 1;
  padding-left: 7px;
  appearance: none;
  color: ${c.muted};
  background: #f7f7f8;
  opacity: 1;
`;

const PickMark = styled.span`
  display: flex;
  align-items: center;
  justify-content: center;
  width: 15px;
  border-left: 1px solid #cfd2d4;
`;

const LayerArea = styled.div`
  display: flex;
  height: 177px;
  margin: 0 5px 5px 0;
`;

const LayerList = styled.ul`
  flex: 1;
  overflow: hidden;
`;

const Scroll = styled.div`
  display: flex;
  flex-direction: column;
  width: 15px;
  background: #dfe1e3;
`;

const ScrollButton = styled.button`
  display: flex;
  align-items: center;
  justify-content: center;
  height: 15px;
  border: 1px solid #cfd2d4;
  background: ${c.panel};
`;

const Flip = styled.span`
  transform: rotate(180deg);
`;

const Thumb = styled.span`
  flex: 1;
  margin-bottom: 3px;
  border: 1px solid #b9bcbe;
  background: #f7f7f8;
`;

type Branch = "open" | "line" | "end";
const Guide = ({ kind, h }: { kind: Branch; h: number }) => {
  const m = h / 2 + 0.5;
  return (
    <svg width="16" height={h} viewBox={`0 0 16 ${h}`} aria-hidden="true">
      <g fill="none" stroke="#c3c5c7">
        {kind === "open" && <path d={`M8.500 0V${m - 6}M8.500 ${m + 6}V${h}`} />}
        {kind === "line" && <path d={`M8.500 0V${h}M9 ${m}H16`} />}
        {kind === "end" && <path d={`M8.500 0V${m}H16`} />}
      </g>
      {kind === "open" && <path d={`M6 ${m - 4}l4 4l-4 4z`} fill="#444" />}
    </svg>
  );
};

const model: [Branch, string, string][] = [
  ["open", "design", "设计项"],
  ["line", "plane", "RIGHT"],
  ["line", "plane", "TOP"],
  ["line", "plane", "FRONT"],
  ["line", "csysBrown", "PRT_CSYS_DEF"],
  ["open", "solid", "伸出项 标识39"],
  ["open", "solid", "伸出项 标识74"],
  ["open", "solid", "切口 标识102"],
  ["open", "solid", "切口 标识139"],
];

const layers: [Branch, string, string][] = [
  ["open", "layerRule", "01___PRT_ALL_DTM_PLN"],
  ["open", "layerItem", "01___PRT_DEF_DTM_PLN"],
  ["open", "layerRule", "02___PRT_ALL_AXES"],
  ["line", "layerRule", "03___PRT_ALL_CURVES"],
  ["line", "layerRule", "04___PRT_ALL_DTM_PNT"],
  ["open", "layerRule", "05___PRT_ALL_DTM_CSYS"],
  ["open", "layerItem", "05___PRT_DEF_DTM_CSYS"],
  ["end", "layerRule", "06___PRT_ALL_SURFS"],
];

/* ---------- graphics area ---------- */

const Canvas = styled.section`
  position: relative;
  flex: 1;
  min-width: 0;
  background: #fff;
`;

const Drawing = styled.svg`
  position: absolute;
  inset: 0;
  width: 100%;
  height: 100%;
`;

const Label = styled.text`
  font: 14px ${mono};
`;

const ViewBar = styled.div`
  position: absolute;
  top: 7px;
  left: 50%;
  display: flex;
  gap: 2px;
  padding: 3px;
  border: 1px solid #9b9d9f;
  background: ${c.panel};
  transform: translateX(-50%);
`;

const Note = styled.p`
  position: absolute;
  top: 342px;
  left: 147px;
  width: 304px;
  margin: 0;
  color: ${c.red};
  font: 300 20px/20px "Noto Sans CJK SC", sans-serif;
  white-space: pre;
`;

const Watermark = styled.div`
  position: absolute;
  right: 20px;
  bottom: 6px;
`;

const WatermarkName = styled.div`
  display: flex;
  gap: 6px;
  color: #000;
  font: italic 39px/46px "Noto Sans CJK SC", sans-serif;
`;

const Fire = styled.span`
  color: #ff6634;
`;

const WatermarkUrl = styled.div`
  color: #8b8b8b;
  font: italic 18px/20px "Liberation Sans", sans-serif;
`;

const Flame = styled.svg`
  position: absolute;
  left: 59px;
  top: -12px;
`;

const viewTools = [
  ["zoomFit", "重新调整"], ["zoomIn", "放大"], ["zoomOut", "缩小"], ["repaint", "重画"], ["viewBox", "显示样式"],
  ["savedView", "已保存方向"], ["viewManager", "视图管理器"], ["datum", "基准显示"], ["viewFlip", "草绘视图"],
  ["xray", "透视图"], ["section", "截面"], ["dimShow", "草绘显示"], ["planeShow", "平面显示"],
  ["noteShow", "注释显示"], ["spin", "旋转中心"],
];

const strokes = [
  "M468 255L525 253L560 251H599",
  "M540 251L599 249",
  "M598 252V295L600 299L624 364L695 441",
  "M698 443L747 459L793 476L802 477L860 467L895 461L965 421L997 384L1029 334L1041 257L1085 255L1165 254",
  "M1165 246V295L1145 371",
  "M1143 376L1058 562",
  "M1051 562L1036 594",
  "M1048 568L954 784",
  "M950 779L916 842L882 872",
  "M907 855L876 881L828 891H823L767 878L733 855L698 803L543 490L494 391L476 334L472 253",
  "M844 702L796 700L759 736",
  "M798 707L759 740",
  "M849 705L880 735L882 775L865 801L831 827L766 806L755 749",
];

const Model = () => (
  <Drawing viewBox="295 169 1046 803" role="img" aria-label="PRT0001">
    <path
      d="M472 254A347 347 0 0 0 506 405L704 815A127 127 0 0 0 933 815L1131 405A347 347 0 0 0 1165 254H1039.500A221 221 0 0 1 597.500 254Z"
      fill="#a0adbd"
      stroke="#222"
    />
    <circle cx="818.500" cy="760" r="63" fill="#fff" stroke="#222" />
    <path d="M518.500 254A300 300 0 0 0 1119 254" fill="none" stroke="#222" />
    <g fill="none" shapeRendering="crispEdges">
      <path d="M466.500 249.500H1171.500V891.500H466.500Z" stroke={c.brown} />
      <path d="M295 254.500H466M1172 254.500H1341" stroke={c.cyan} strokeDasharray="7 7" />
      <path d="M466 254.500H1166M818.500 169V891" stroke={c.brown} />
      <path d="M466 254.500H1166M818.500 169V972" stroke={c.cyan} strokeDasharray="7 7" />
      <path d="M750 760.500H888" stroke={c.brown} strokeDasharray="16 3 4 3" />
      <path d="M841.500 243V254" stroke={c.brown} />
      <path d="M818.500 222V250M818.500 546V562" stroke="#ff3030" />
      <path d="M820 570.500H843M841 253.500H849" stroke="#30f6ff" />
    </g>
    <circle cx="819" cy="231" r="2" fill="#ff3030" />
    <circle cx="819" cy="546" r="2" fill="#ff3030" />
    <circle cx="819" cy="570.500" r="3" fill="#2bf52b" />
    <circle cx="843" cy="570.500" r="2" fill="#30f6ff" />
    <g fill={c.brown}>
      <Label x="467" y="248">TOP</Label>
      <Label x="1172" y="253">RIGHT</Label>
      <Label x="822" y="267">PRT_CSYS_DEF</Label>
      <Label x="819" y="253">A</Label>
      <Label x="819" y="760">A_2</Label>
      <Label x="819" y="891">FRONT</Label>
    </g>
    <Label x="821" y="218" fill="#ff3030">X</Label>
    <Label x="822" y="249" fill="#2bf52b">Y</Label>
    <Label x="855" y="251" fill="#30f6ff">Z</Label>
    <path d="M468 255L471 287" stroke={c.red} strokeDasharray="6 3" />
    <g fill="none" stroke={c.red} strokeWidth="4" strokeLinecap="square" strokeLinejoin="round">
      {strokes.map((d) => <path key={d} d={d} />)}
    </g>
  </Drawing>
);

export default function App() {
  return (
    <Page>
      <GlobalStyle />
      <TitleBar>
        <QuickBar>
          <Brand><Icon name="logo" />creo</Brand>
          <QuickButton $w={30} aria-label="新建"><Icon name="newFile" /></QuickButton>
          <QuickButton $w={20} aria-label="打开"><Icon name="openFile" /></QuickButton>
          <QuickButton $w={28} aria-label="保存"><Icon name="save" /></QuickButton>
          <QuickButton $w={22} aria-label="撤消"><Icon name="undo" /></QuickButton>
          <QuickButton $w={12} aria-label="撤消列表"><Caret color="#a0a4a4" /></QuickButton>
          <QuickButton $w={28} aria-label="重做"><Icon name="redo" /></QuickButton>
          <QuickButton $w={8} aria-label="重做列表"><Caret color="#a0a4a4" /></QuickButton>
          <QuickButton $w={28} aria-label="重新生成"><Icon name="regen" /></QuickButton>
          <QuickButton $w={22} aria-label="窗口"><Icon name="windows" /></QuickButton>
          <QuickButton $w={14} aria-label="窗口列表"><Caret /></QuickButton>
          <QuickButton $w={25} aria-label="关闭窗口"><Icon name="closeWin" /></QuickButton>
          <QuickRule />
          <QuickButton aria-label="自定义">
            <svg width="8" height="8" viewBox="0 0 8 8"><path d="M0 .5h8" stroke="#444" /><path d="M0 3h8L4 7z" fill="#444" /></svg>
          </QuickButton>
        </QuickBar>
        <Title>PRT0001 (活动的) - Creo Parametric</Title>
        <WindowButtons>
          <QuickButton aria-label="最小化"><Icon name="min" /></QuickButton>
          <QuickButton aria-label="最大化"><Icon name="max" /></QuickButton>
          <QuickButton aria-label="关闭"><Icon name="x" /></QuickButton>
        </WindowButtons>
      </TitleBar>
      <TabBar>
        <Tab $kind="file">文件</Tab>
        {["模型", "分析", "实时仿真", "注释", "工具", "视图", "柔性建模", "应用程序"].map((n) => <Tab key={n}>{n}</Tab>)}
        <Tab $kind="active">草绘</Tab>
        <TabTools>
          <button aria-label="最小化功能区"><Icon name="up" /></button>
          <button aria-label="搜索"><Icon name="find" /></button>
          <button aria-label="学习"><Icon name="learn" /></button>
          <button aria-label="学习列表"><Caret color="#fff" /></button>
          <button aria-label="帮助"><Icon name="help" /></button>
        </TabTools>
      </TabBar>
      <Ribbon>
        <Group name="设置" w={83} pad={7} caret>
          <Tools items={[t("sketchSetup", "草绘设置"), t("reference", "参考"), t("viewFlip", "草绘视图")]} />
        </Group>
        <Group name="插入" w={91}>
          <Big icon="importFile" label="导入" w={46} />
          <Big icon="palette" label="选项板" w={38} />
        </Group>
        <Group name="操作" w={71} pad={7} caret>
          <Stack>
            <ToolButton $gap={0} $off aria-label="剪切"><Icon name="cut" /></ToolButton>
            <ToolButton $gap={0} $off aria-label="复制"><Icon name="copy" /></ToolButton>
            <ToolButton $gap={0} $off aria-label="粘贴"><Icon name="paste" /></ToolButton>
          </Stack>
          <SelectButton>
            <SelectIcon><BigIcon name="cursor" /></SelectIcon>
            <SelectText>选择</SelectText>
            <Caret />
          </SelectButton>
        </Group>
        <Group name="基准" w={123} pad={7}>
          <Tools w={64} items={[t("axis", "中心线"), t("point", "点"), t("csys", "坐标系")]} />
          <Tools items={[t("ball", "旧版", false, true)]} />
        </Group>
        <Group name="草绘" w={398}>
          <Big icon="construct" label="构造模式" w={63} />
          <InnerRule />
          <Tools gap={3} w={66} items={[t("polyline", "线", true), t("rectangle", "矩形", true), t("circle", "圆", true)]} />
          <Tools gap={3} w={66} items={[t("arc", "弧", true), t("ellipse", "椭圆", true), t("spline", "样条")]} />
          <Tools gap={3} w={66} items={[t("fillet", "圆角", true), t("chamfer", "倒角", true), t("textTool", "文本")]} />
          <Tools gap={3} w={52} items={[t("offset", "偏移"), t("thicken", "加厚"), t("project", "投影")]} />
          <Tools gap={3} items={[t("centerDash", "中心线", true), t("pointDash", "点"), t("csysDash", "坐标系")]} />
        </Group>
        <Group name="编辑" w={159} pad={7}>
          <Tools w={52} items={[t("modify", "修改"), t("mirror", "镜像", false, true), t("divide", "分割")]} />
          <Tools items={[t("trim", "删除段"), t("corner", "拐角"), t("rotate", "旋转调整大小", false, true)]} />
        </Group>
        <Group name="约束" w={163} pad={7} caret>
          <Tools w={52} items={[t("cVert", "竖直"), t("cHoriz", "水平"), t("cPerp", "垂直")]} />
          <Tools w={52} items={[t("cTangent", "相切"), t("cMid", "中点"), t("cCoin", "重合")]} />
          <Tools items={[t("cSym", "对称"), t("cEqual", "相等"), t("cParallel", "平行")]} />
        </Group>
        <Group name="尺寸" w={99} caret>
          <Big icon="dimension" label="尺寸" w={47} />
          <Tools items={[t("perimeter", "周长"), t("baseline", "基线"), t("refDim", "参考")]} />
        </Group>
        <Group name="检查" w={63} caret>
          <Big icon="requirement" label="特征要求" w={62} />
        </Group>
        <Group name="关闭" w={87} pad={3}>
          <Big icon="ok" label="确定" w={40} />
          <Big icon="cancel" label="取消" w={40} />
        </Group>
      </Ribbon>
      <Main>
        <Side>
          <SideTabs>
            <SideTab $on aria-label="模型树"><Icon name="treeTab" /></SideTab>
            <SideTab aria-label="文件夹浏览器"><Icon name="folders" /></SideTab>
          </SideTabs>
          <PanelBar>
            <MenuMark aria-label="模型树菜单"><svg width="10" height="7" viewBox="0 0 10 7"><path d="M0 0h10L5 7z" fill="#8a8a8a" /></svg></MenuMark>
            <Icon name="greenCube" />
            <Icon name="dots" />
            <PanelButton $left={11} aria-label="全部展开"><Icon name="expand" /></PanelButton>
            <PanelButton aria-label="全部折叠"><Icon name="collapse" /></PanelButton>
            <PanelButton $on aria-label="显示列"><Icon name="columns" /></PanelButton>
            <PanelRule />
            <PanelButton aria-label="树过滤器"><Icon name="treeFilter" /></PanelButton>
            <PanelButton aria-label="树列"><Icon name="treeColumns" /></PanelButton>
            <PanelRule />
            <PanelButton aria-label="设计项"><Icon name="design" /></PanelButton>
            <More aria-label="更多">»</More>
            <PanelButton aria-label="设置"><Icon name="settingsDoc" /></PanelButton>
          </PanelBar>
          <FilterRow>
            <Icon name="funnel" />
            <FilterField>
              <FilterInput aria-label="过滤模型树" />
              <Clear aria-label="清除">
                <svg width="16" height="16" viewBox="0 0 16 16"><path d="M4 4.500l8 8M12 4.500l-8 8" stroke="#9a9c9c" strokeWidth="1.500" /></svg>
              </Clear>
            </FilterField>
            <FilterButton aria-label="过滤选项"><Caret /></FilterButton>
            <FilterButton aria-label="添加"><Icon name="plus" /></FilterButton>
          </FilterRow>
          <Tree>
            <TreeRow $h={22} $gap={4}><Icon name="part" /><TreeText>PRT0001.PRT</TreeText></TreeRow>
            {model.map(([kind, icon, name]) => (
              <TreeRow key={name} $h={22} $gap={4}>
                <Guide kind={kind} h={22} />
                <Icon name={icon} />
                <TreeText $on={name === "RIGHT"}>{name}</TreeText>
              </TreeRow>
            ))}
            <InsertLine />
            <TreeRow $h={22} $gap={4}>
              <Guide kind="end" h={22} />
              <Icon name="sketch" />
              <NewFeature>
                <svg width="9" height="20" viewBox="0 0 9 20" aria-hidden="true">
                  <path d="M4.500 2v9M0 6.500h9M1 3l7 7M8 3l-7 7" stroke="#333" />
                  <circle cx="4.500" cy="6.500" r="2.500" fill="#ffee00" />
                </svg>
                草绘 1
              </NewFeature>
            </TreeRow>
          </Tree>
          <Divider />
          <PanelBar>
            <MenuMark aria-label="层树菜单"><svg width="10" height="7" viewBox="0 0 10 7"><path d="M0 0h10L5 7z" fill="#8a8a8a" /></svg></MenuMark>
            <Icon name="layersGreen" />
            <Icon name="dots" />
            <PanelButton $left={14} aria-label="全部展开"><Icon name="expand" /></PanelButton>
            <PanelButton aria-label="全部折叠"><Icon name="collapse" /></PanelButton>
            <PanelRule />
            <PanelButton $on aria-label="显示层"><Icon name="layersEye" /></PanelButton>
            <PanelButton $on aria-label="显示项"><Icon name="layerCube" /></PanelButton>
            <PanelButton $on aria-label="隔离层"><Icon name="layerDash" /></PanelButton>
            <More aria-label="更多">»</More>
            <PanelButton aria-label="层列表"><Icon name="layersList" /></PanelButton>
            <PanelButton aria-label="设置"><Icon name="settingsDoc" /></PanelButton>
          </PanelBar>
          <LayerPicker>
            <PickButton aria-label="选择"><Icon name="cursorSmall" /></PickButton>
            <PickSelect aria-label="活动层对象" disabled><option>PRT0001.PRT</option></PickSelect>
            <PickMark><Caret color="#8a8c8c" /></PickMark>
          </LayerPicker>
          <LayerArea>
            <LayerList>
              <TreeRow $h={20} $gap={7}><Icon name="layers" /><TreeText>层</TreeText></TreeRow>
              {layers.map(([kind, icon, name]) => (
                <TreeRow key={name} $h={20} $gap={4}>
                  <Guide kind={kind} h={20} />
                  <Icon name={icon} />
                  <Inset />
                  <TreeText>{name}</TreeText>
                </TreeRow>
              ))}
            </LayerList>
            <Scroll>
              <ScrollButton aria-label="向上滚动"><Flip><Caret color="#8a8c8c" /></Flip></ScrollButton>
              <Thumb />
              <ScrollButton aria-label="向下滚动"><Caret color="#8a8c8c" /></ScrollButton>
            </Scroll>
          </LayerArea>
        </Side>
        <Canvas>
          <Model />
          <ViewBar>
            {viewTools.map(([icon, name]) => (
              <PanelButton key={icon} $on={icon === "noteShow" || icon === "spin"} aria-label={name}><Icon name={icon} /></PanelButton>
            ))}
          </ViewBar>
          <Watermark>
            <WatermarkName><Fire>野火</Fire><span>论坛</span></WatermarkName>
            <WatermarkUrl>www.proewildfire.cn</WatermarkUrl>
            <Flame width="30" height="44" viewBox="0 0 30 44" aria-hidden="true">
              <path d="M9 0Q24 9 22 22Q20 34 11 42L6 40Q14 32 12 14Q17 20 15 28Q21 14 9 0Z" fill="#ff6634" />
            </Flame>
          </Watermark>
        </Canvas>
        <Note>{"站在左边看到的俯视图轮廓和站在\n右边看到的俯视图的轮廓也是一样\n的，只是我们观察的方位不一样，\n所以轮廓的摆放位置不一样，但是\n物体的实际位置是没有变的，是我\n们观察的位置变化了而已。"}</Note>
      </Main>
    </Page>
  );
}
